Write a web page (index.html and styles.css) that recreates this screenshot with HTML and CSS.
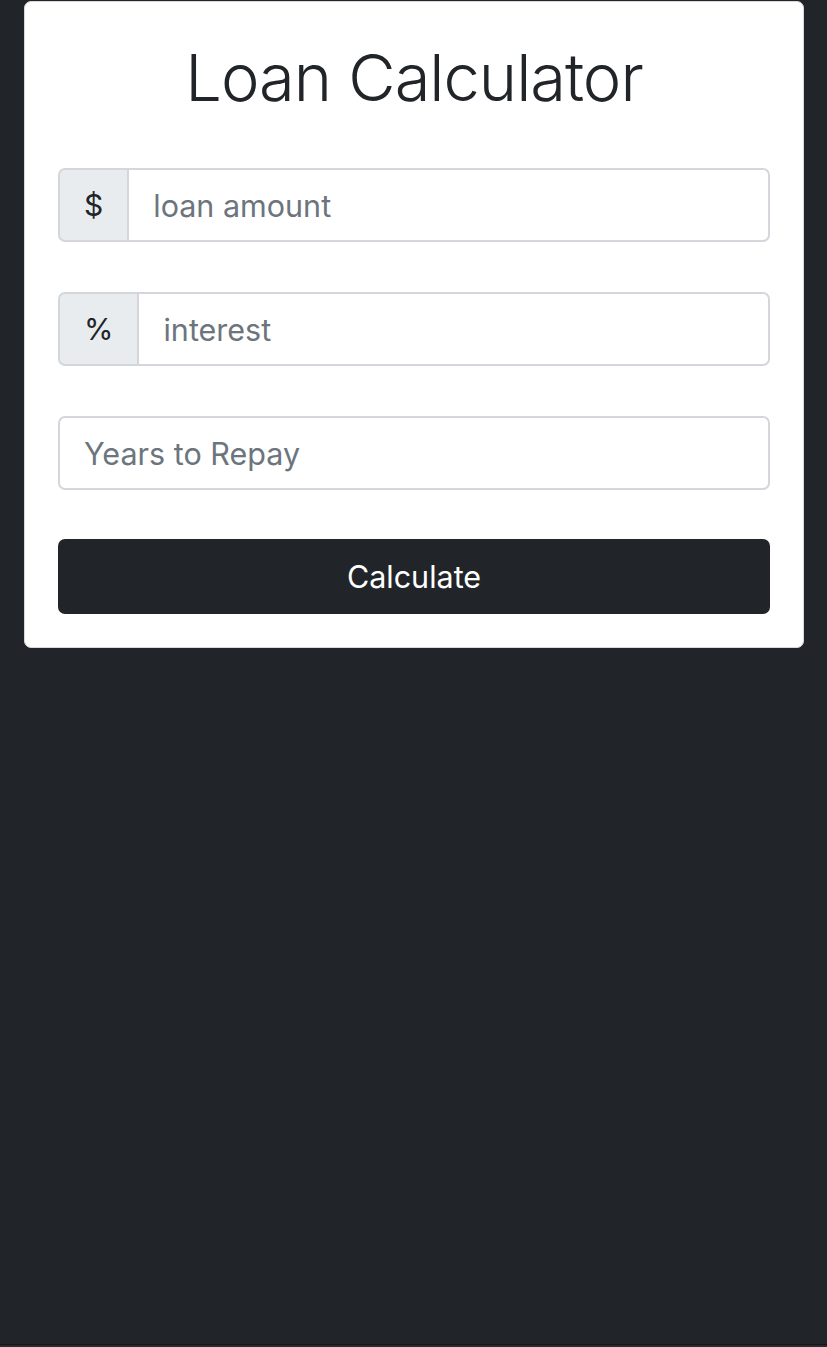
FILE: index.html
```html
<!DOCTYPE html>
<html lang="en">
<head>
<meta charset="utf-8">
<title>Loan Calculator</title>
<link rel="stylesheet" href="styles.css">
</head>
<body>
<div class="page">
  <div class="card">
    <h1 class="title">Loan Calculator</h1>
    <form class="form">
      <div class="group">
        <span class="addon">$</span>
        <input class="field joined" type="text" placeholder="loan amount">
      </div>
      <div class="group">
        <span class="addon">%</span>
        <input class="field joined" type="text" placeholder="interest">
      </div>
      <div class="group">
        <input class="field" type="text" placeholder="Years to Repay">
      </div>
      <button class="btn" type="button">Calculate</button>
    </form>
  </div>
</div>
<div class="footer-line"></div>
</body>
</html>
```

FILE: styles.css
```css
* { box-sizing: border-box; }
html, body { height: 100%; }
body {
  margin: 0;
  background: #212529;
  font-family: Inter, "Noto Sans", "Liberation Sans", sans-serif;
  color: #212529;
  display: flex;
  flex-direction: column;
}
.page {
  flex: 1;
  padding: 1px 23px 0 24px;
}
.card {
  width: 780px;
  background: #fff;
  border: 1px solid #d6d8db;
  border-radius: 7px;
  padding: 0 33px 33px;
}
.title {
  margin: 0;
  padding: 36px 0 50px;
  font-size: 65px;
  font-weight: 300;
  line-height: 80px;
  text-align: center;
  letter-spacing: -1px;
}
.form { display: flex; flex-direction: column; gap: 50px; }
.group {
  display: flex;
  height: 74px;
}
.addon {
  display: flex;
  align-items: center;
  padding: 0 24px;
  background: #e9ecef;
  border: 2px solid #d3d6da;
  border-radius: 7px 0 0 7px;
  font-size: 30px;
  color: #212529;
}
.field {
  flex: 1;
  min-width: 0;
  height: 100%;
  border: 2px solid #d3d6da;
  border-radius: 7px;
  padding: 0 24px;
  font-family: inherit;
  font-size: 30.5px;
  color: #495057;
  background: #fff;
  outline: none;
}
.field.joined {
  margin-left: -2px;
  border-radius: 0 7px 7px 0;
}
.field::placeholder { color: #6c757d; opacity: 1; }
.btn {
  height: 75px;
  margin-top: -1px;
  border: none;
  border-radius: 7px;
  background: #212529;
  color: #fff;
  font-family: inherit;
  font-size: 30.5px;
  font-weight: 400;
}
.footer-line {
  height: 3px;
  border-top: 1px solid #141618;
  background: #272a2e;
}
```
